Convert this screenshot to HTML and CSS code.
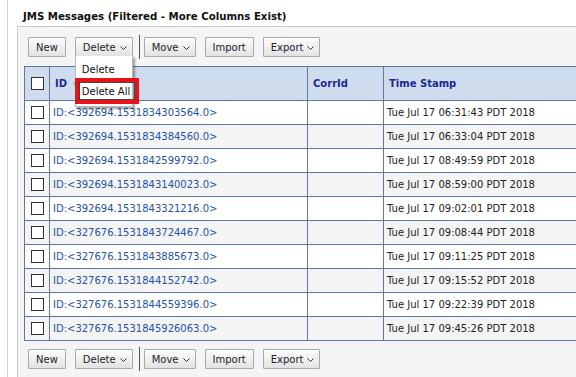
FILE: index.html
```html
<!DOCTYPE html>
<html lang="en">
<head>
    <meta charset="UTF-8">
    <meta name="viewport" content="width=device-width, initial-scale=1.0">
    <title>JMS Messages</title>
    <link rel="stylesheet" href="styles.css">
</head>
<body>
    <div class="page">
        <h1 class="title">JMS Messages (Filtered - More Columns Exist)</h1>
        <div class="panel">
            <div class="toolbar">
                <button class="btn">New</button>
                <div class="dropdown">
                    <button class="btn has-menu">Delete <svg class="chev" width="7" height="4" viewBox="0 0 7 4"><polyline points="0.5,0.5 3.5,3.5 6.5,0.5" /></svg></button>
                    <div class="menu">
                        <div class="menu-item">Delete</div>
                        <div class="menu-item">Delete All</div>
                        <div class="highlight"></div>
                    </div>
                </div>
                <span class="sep"></span>
                <button class="btn has-menu">Move <svg class="chev" width="7" height="4" viewBox="0 0 7 4"><polyline points="0.5,0.5 3.5,3.5 6.5,0.5" /></svg></button>
                <button class="btn">Import</button>
                <button class="btn has-menu">Export <svg class="chev" width="7" height="4" viewBox="0 0 7 4"><polyline points="0.5,0.5 3.5,3.5 6.5,0.5" /></svg></button>
            </div>

            <table class="messages">
                <colgroup>
                    <col class="col-check">
                    <col class="col-id">
                    <col class="col-corr">
                    <col class="col-time">
                </colgroup>
                <thead>
                    <tr>
                        <th class="check-cell"><span class="checkbox"></span></th>
                        <th>ID <svg class="sort" width="5" height="7" viewBox="0 0 5 7"><polygon points="5,0 0,3.5 5,7" /></svg></th>
                        <th>CorrId</th>
                        <th>Time Stamp</th>
                    </tr>
                </thead>
                <tbody id="rows"></tbody>
            </table>

            <div class="toolbar bottom">
                <button class="btn">New</button>
                <button class="btn has-menu">Delete <svg class="chev" width="7" height="4" viewBox="0 0 7 4"><polyline points="0.5,0.5 3.5,3.5 6.5,0.5" /></svg></button>
                <span class="sep"></span>
                <button class="btn has-menu">Move <svg class="chev" width="7" height="4" viewBox="0 0 7 4"><polyline points="0.5,0.5 3.5,3.5 6.5,0.5" /></svg></button>
                <button class="btn">Import</button>
                <button class="btn has-menu">Export <svg class="chev" width="7" height="4" viewBox="0 0 7 4"><polyline points="0.5,0.5 3.5,3.5 6.5,0.5" /></svg></button>
            </div>
        </div>
    </div>

    <script>
        // Messages shown in the table
        const messages = [
            ['392694.1531834303564.0', 'Tue Jul 17 06:31:43 PDT 2018'],
            ['392694.1531834384560.0', 'Tue Jul 17 06:33:04 PDT 2018'],
            ['392694.1531842599792.0', 'Tue Jul 17 08:49:59 PDT 2018'],
            ['392694.1531843140023.0', 'Tue Jul 17 08:59:00 PDT 2018'],
            ['392694.1531843321216.0', 'Tue Jul 17 09:02:01 PDT 2018'],
            ['327676.1531843724467.0', 'Tue Jul 17 09:08:44 PDT 2018'],
            ['327676.1531843885673.0', 'Tue Jul 17 09:11:25 PDT 2018'],
            ['327676.1531844152742.0', 'Tue Jul 17 09:15:52 PDT 2018'],
            ['327676.1531844559396.0', 'Tue Jul 17 09:22:39 PDT 2018'],
            ['327676.1531845926063.0', 'Tue Jul 17 09:45:26 PDT 2018']
        ];

        document.getElementById('rows').innerHTML = messages.map(m => `
            <tr>
                <td class="check-cell"><span class="checkbox"></span></td>
                <td><a href="#" class="msg-link">ID:&lt;${m[0]}&gt;</a></td>
                <td></td>
                <td>${m[1]}</td>
            </tr>
        `).join('');
    </script>
</body>
</html>
```

FILE: styles.css
```css
* {
    margin: 0;
    padding: 0;
    box-sizing: border-box;
}
body {
    background-color: #fff;
    font-family: Tahoma, "DejaVu Sans", sans-serif;
    font-size: 10px;
    color: #222;
    overflow: hidden;
}
.page {
    margin-left: 7px;
    padding-left: 9px;
    border-left: 1px solid #d4d4d4;
    min-height: 100vh;
    display: flex;
    flex-direction: column;
}
.title {
    font-size: 10.2px;
    font-weight: bold;
    color: #111;
    line-height: 16px;
    padding: 9px 0 1px 6px;
}
.panel {
    flex: 1;
    background-color: #f4f4f4;
    border-top: 1px solid #cacaca;
    border-left: 1px solid #cacaca;
    padding: 0 0 0 6px;
}
.toolbar {
    display: flex;
    align-items: center;
    gap: 9px;
    padding: 8px 0 7px 4px;
}
.toolbar.bottom {
    padding-top: 6px;
}
.btn {
    height: 20px;
    padding: 0 7px;
    font-family: Tahoma, "DejaVu Sans", sans-serif;
    font-size: 10px;
    color: #1c1c2c;
    background: linear-gradient(#fdfdfd, #e2e2e2);
    border: 1px solid #a9a9a9;
    border-radius: 1px;
    display: flex;
    align-items: center;
    gap: 4px;
    cursor: pointer;
}
.btn.has-menu {
    padding-right: 5px;
}
.chev {
    fill: none;
    stroke: #333;
    stroke-width: 1;
    margin-top: 1px;
}
.sep {
    width: 1px;
    height: 24px;
    background-color: #555;
    margin: 0 -5px 0 -3px;
}
.dropdown {
    position: relative;
}
.menu {
    position: absolute;
    top: 19px;
    left: 0;
    width: 58px;
    padding: 3px 0 3px;
    background-color: #fff;
    border: 1px solid #b8b8b8;
    border-top: none;
    box-shadow: 2px 2px 2px rgba(0, 0, 0, 0.35);
    z-index: 2;
}
.menu-item {
    padding: 0 6px;
    line-height: 22px;
    color: #111;
    white-space: nowrap;
}
.highlight {
    position: absolute;
    left: -1px;
    top: 22px;
    width: 64px;
    height: 26px;
    border: 4px solid #e8121a;
    box-shadow: inset 0 0 0 1px #444;
}
.messages {
    border-collapse: collapse;
    table-layout: fixed;
    width: 640px;
    background-color: #fff;
}
.col-check { width: 25px; }
.col-id { width: 258px; }
.col-corr { width: 76px; }
.col-time { width: 281px; }
.messages th,
.messages td {
    border: 1px solid #5c7aa3;
    text-align: left;
    white-space: nowrap;
}
.messages th {
    height: 34px;
    background-color: #cfdcee;
    color: #1d2890;
    font-weight: bold;
    padding: 0 5px;
}
.messages td {
    height: 24px;
    padding: 0 3px;
}
.messages tbody tr:nth-child(even) td {
    background-color: #f4f4f4;
}
.messages .check-cell {
    padding: 0;
    text-align: center;
}
.checkbox {
    display: inline-block;
    width: 13px;
    height: 13px;
    border: 1px solid #333;
    background-color: #fff;
    vertical-align: middle;
}
.sort {
    fill: #9a9a9a;
    margin-left: 2px;
}
.msg-link {
    color: #2452a8;
    text-decoration: none;
}
```
